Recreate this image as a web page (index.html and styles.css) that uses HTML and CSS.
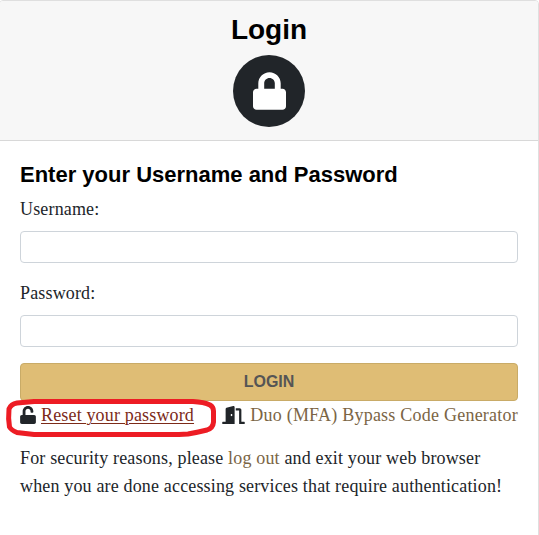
FILE: index.html
```html
<!DOCTYPE html>
<html lang="en">
	<head>
		<meta charset="UTF-8" />
		<meta name="viewport" content="width=device-width, initial-scale=1.0" />
		<title>Login</title>
		<link rel="stylesheet" href="styles.css">
	</head>
	<body>
		<main class="card">
			<header class="card-header">
				<h1>Login</h1>
				<div class="lock-badge">
					<svg viewBox="0 0 448 512" aria-hidden="true"><path d="M400 224h-24v-72C376 68.2 307.8 0 224 0S72 68.2 72 152v72H48c-26.5 0-48 21.5-48 48v192c0 26.5 21.5 48 48 48h352c26.5 0 48-21.5 48-48V272c0-26.5-21.5-48-48-48zm-104 0H152v-72c0-39.7 32.3-72 72-72s72 32.3 72 72v72z"/></svg>
				</div>
			</header>
			<div class="card-body">
				<h2>Enter your Username and Password</h2>
				<form>
					<div class="form-group">
						<label for="username">Username:</label>
						<input type="text" id="username" name="username" />
					</div>
					<div class="form-group">
						<label for="password">Password:</label>
						<input type="password" id="password" name="password" />
					</div>
					<button type="submit" class="btn">LOGIN</button>
				</form>
				<div class="links">
					<div class="link-item">
						<svg class="icon-unlock" viewBox="0 0 448 512" aria-hidden="true"><path d="M400 256H152V152.9c0-39.6 31.7-72.5 71.3-72.9 40-.4 72.7 32.1 72.7 72v16c0 13.3 10.7 24 24 24h32c13.3 0 24-10.7 24-24v-16C376 68 307.5-.3 223.5 0 139.5.3 72 69.5 72 153.5V256H48c-26.5 0-48 21.5-48 48v160c0 26.5 21.5 48 48 48h352c26.5 0 48-21.5 48-48V304c0-26.5-21.5-48-48-48z"/></svg>
						<a href="#" class="reset">Reset your password</a>
						<svg class="marker" viewBox="0 0 212 40" aria-hidden="true"><path d="M29 4.500 H188 Q199 5 205 8 Q208.500 10 208.500 14 V25 Q208 31 202 33 Q194 35 183 37 L174 37.500 H29 L12 35.500 Q6 33 4.500 30 Q3 22 4 12 Q6 7 12 6 Z"/></svg>
					</div>
					<div class="link-item">
						<svg class="icon-door" viewBox="0 0 640 512" aria-hidden="true"><path d="M624 448h-80V113.45C544 86.19 522.47 64 496 64H384v64h96v384h144c8.84 0 16-7.16 16-16v-32c0-8.84-7.16-16-16-16zM312.24 1.01l-192 49.74C105.99 54.44 96 67.7 96 82.92V448H16c-8.84 0-16 7.16-16 16v32c0 8.84 7.16 16 16 16h336V33.18c0-21.58-19.56-37.41-39.76-32.17zM264 288c-13.25 0-24-14.33-24-32s10.75-32 24-32 24 14.33 24 32-10.75 32-24 32z"/></svg>
						<a href="#" class="bypass">Duo (MFA) Bypass Code Generator</a>
					</div>
				</div>
				<p>For security reasons, please <a href="#">log out</a> and exit your web browser when you are done accessing services that require authentication!</p>
			</div>
		</main>
	</body>
</html>
```

FILE: styles.css
```css
* {
	box-sizing: border-box;
}
body {
	margin: 0;
	background: #fff;
	color: #212529;
	font-family: "Liberation Serif", "Times New Roman", serif;
	font-size: 18px;
	line-height: 28px;
	letter-spacing: 0.16px;
	overflow: hidden;
}
.card {
	margin-left: -1px;
	min-height: 560px;
	border: 1px solid #dfdfdf;
	border-radius: 4px;
}
.card-header {
	height: 140px;
	padding-top: 12px;
	background: #f7f7f7;
	border-bottom: 1px solid #d8d8d8;
	border-radius: 3px 3px 0 0;
	text-align: center;
}
h1,
h2 {
	margin: 0;
	color: #000;
	font-family: "Liberation Sans", Arial, sans-serif;
	font-weight: 700;
	letter-spacing: 0;
}
h1 {
	font-size: 28px;
	line-height: 34px;
}
.lock-badge {
	display: flex;
	align-items: center;
	justify-content: center;
	width: 72px;
	height: 72px;
	margin: 8px auto 0;
	border-radius: 50%;
	background: #212529;
}
.lock-badge svg {
	width: 33px;
	height: 38px;
	fill: #fff;
}
.card-body {
	padding: 21px 20px 20px;
}
h2 {
	margin-bottom: 7px;
	font-size: 22px;
	line-height: 26px;
}
.form-group {
	margin-bottom: 16px;
}
label {
	display: block;
	margin-bottom: 8px;
}
input {
	display: block;
	width: 100%;
	height: 32px;
	padding: 4px 8px;
	border: 1px solid #ced4da;
	border-radius: 4px;
	background: #fff;
	font-size: 16px;
}
.btn {
	display: block;
	width: 100%;
	height: 38px;
	padding: 0;
	border: 1px solid #c9ab67;
	border-radius: 4px;
	background: #dfbd75;
	color: #555;
	font-family: "Liberation Sans", Arial, sans-serif;
	font-size: 16px;
	font-weight: 700;
}
.links {
	display: flex;
	justify-content: space-between;
	margin-bottom: 16px;
}
.link-item {
	position: relative;
	display: flex;
	align-items: center;
	gap: 5px;
	height: 27px;
	white-space: nowrap;
}
.link-item svg {
	fill: #212529;
}
.icon-unlock {
	width: 16px;
	height: 18px;
}
.icon-door {
	width: 23px;
	height: 18px;
}
a {
	color: #7b6545;
	text-decoration: none;
}
.link-item a {
	padding-top: 1px;
}
.reset {
	color: #7c2a18;
	text-decoration: underline;
	text-decoration-thickness: 1px;
	text-underline-offset: 2px;
}
.bypass {
	letter-spacing: 0.23px;
}
/* hand-drawn ring around the reset link */
.link-item .marker {
	position: absolute;
	top: -4px;
	left: -15px;
	width: 212px;
	height: 40px;
	fill: none;
	stroke: #ed1c24;
	stroke-width: 5;
	pointer-events: none;
}
p {
	margin: 0;
}
```
